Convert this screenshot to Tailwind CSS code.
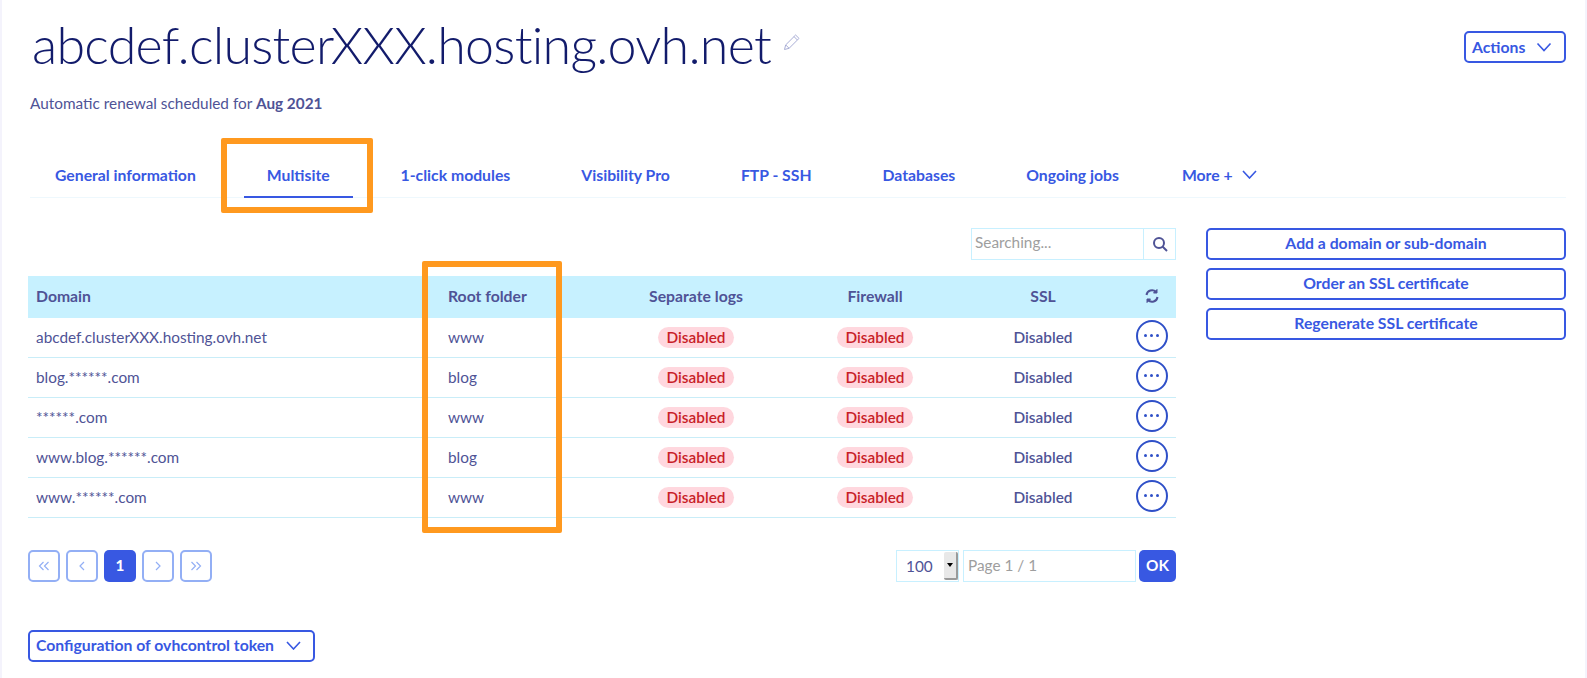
<!DOCTYPE html>
<html lang="en">
<head>
  <meta charset="UTF-8" />
  <title>Multisite | abcdef.clusterXXX.hosting.ovh.net</title>
  <script src="https://cdn.jsdelivr.net/npm/@tailwindcss/browser@4"></script>
</head>
<body class="bg-white font-[family-name:Lato,sans-serif] text-[15.35px] text-[#4f5396] overflow-hidden">
  <div class="relative h-[678px] w-[1587px] border-x-[2px] border-[#f4f3fc] pr-[19px] pl-[26px]">

    <!-- header -->
    <div class="flex items-start justify-between h-[155px]">
      <div>
        <div class="flex items-center pt-[14px] h-[74px]">
          <h1 class="font-light text-[52px] tracking-[-0.75px] leading-[60px] text-[#121b6b] ml-[4px]">abcdef.clusterXXX.hosting.ovh.net</h1>
          <svg class="ml-[12px] -mt-[4px]" width="18" height="18" viewBox="0 0 18 18" fill="none" stroke="#a9aed6" stroke-width="1"><path d="M1.5 16.5l1.2-4.6L12.6 2l3.4 3.4-9.9 9.900z"/><path d="M2.700 11.900l3.400 3.400M11 3.600l3.400 3.400"/></svg>
        </div>
        <p class="mt-[20px] ml-[2px] leading-[18px]">Automatic renewal scheduled for <b class="font-bold">Aug 2021</b></p>
      </div>
      <button class="mt-[31px] flex items-center justify-between h-[32px] w-[102px] pr-[12px] pl-[6px] border-[2px] border-[#3858e2] rounded-[5px] font-bold text-[15.75px] text-[#3858e2]">
        Actions
        <svg width="16" height="10" viewBox="0 0 16 10" fill="none" stroke="#3858e2" stroke-width="1.6"><path d="M1.5 1.5L8 8.5l6.5-7"/></svg>
      </button>
    </div>

    <!-- tabs -->
    <nav class="flex items-stretch gap-[21px] h-[43px] ml-[2px] border-b border-[#eef8fd] font-bold text-[15.75px] text-[#3858e2]">
      <a class="flex items-center px-[25px] pb-[3px]" href="#">General information</a>
      <a class="flex items-center mx-[2px] px-[23px] pb-[1px] border-b-[2px] border-[#3858e2] -mb-[1px]" href="#">Multisite</a>
      <a class="flex items-center px-[25px] pb-[3px]" href="#">1-click modules</a>
      <a class="flex items-center px-[25px] pb-[3px]" href="#">Visibility Pro</a>
      <a class="flex items-center px-[25px] pb-[3px]" href="#">FTP - SSH</a>
      <a class="flex items-center px-[25px] pb-[3px]" href="#">Databases</a>
      <a class="flex items-center px-[25px] pb-[3px]" href="#">Ongoing jobs</a>
      <a class="flex items-center gap-[9px] pl-[17px] pb-[3px]" href="#">
        More +
        <svg width="15" height="9" viewBox="0 0 15 9" fill="none" stroke="#3858e2" stroke-width="1.6"><path d="M1 1l6.500 7L14 1"/></svg>
      </a>
    </nav>

    <!-- main -->
    <div class="flex gap-[30px] mt-[30px]">
      <div class="w-[1148px]">
        <div class="flex justify-end">
          <div class="flex h-[32px] w-[205px] border border-[#c8f0ff]">
            <input class="w-[172px] px-[3px] pb-[2px] border-r border-[#c8f0ff] outline-none placeholder:text-[#9e9e9e]" placeholder="Searching..." />
            <div class="flex flex-1 items-center justify-center">
              <svg width="16" height="16" viewBox="0 0 16 16" fill="none" stroke="#4f5396" stroke-width="2"><circle cx="7" cy="7" r="5"/><path d="M10.500 10.500L15 15"/></svg>
            </div>
          </div>
        </div>

        <table class="mt-[16px] w-full table-fixed border-separate border-spacing-0 [&_td]:border-b [&_td]:border-[#c9edf8]">
          <colgroup>
            <col class="w-[412px]"><col class="w-[161px]"><col class="w-[190px]"><col class="w-[168px]"><col class="w-[168px]"><col class="w-[49px]">
          </colgroup>
          <thead>
            <tr class="h-[42px] bg-[#c7f1ff] text-[15.75px]">
              <th class="px-[8px] pb-[3px] text-left font-bold">Domain</th>
              <th class="px-[8px] pb-[3px] text-left font-bold">Root folder</th>
              <th class="pb-[3px] font-bold">Separate logs</th>
              <th class="pb-[3px] font-bold">Firewall</th>
              <th class="pb-[3px] font-bold">SSL</th>
              <th class="pb-[3px]">
                <svg class="mx-auto" width="14" height="14" viewBox="0 0 14 14" fill="none" stroke="#4f5396" stroke-width="2"><path d="M1.5 6A5.5 5.5 0 0 1 11 3"/><path d="M12.5 8A5.5 5.5 0 0 1 3 11"/><path d="M12 .5V4H8.500z M2 13.500V10h3.500z" fill="#4f5396" stroke-width="1"/></svg>
              </th>
            </tr>
          </thead>
          <tbody>
            <tr class="h-[40px]">
              <td class="px-[8px]">abcdef.clusterXXX.hosting.ovh.net</td><td class="px-[8px]">www</td>
              <td class="text-center"><span class="inline-block rounded-full bg-[#ffd7de] px-[9px] leading-[21px] font-semibold text-[#c81e28]">Disabled</span></td>
              <td class="text-center"><span class="inline-block rounded-full bg-[#ffd7de] px-[9px] leading-[21px] font-semibold text-[#c81e28]">Disabled</span></td>
              <td class="text-center font-semibold">Disabled</td>
              <td><button class="mx-auto mb-[4px] flex h-[32px] w-[32px] items-center justify-center gap-[3px] rounded-full border-[2px] border-[#2f50c8]"><i class="h-[3px] w-[3px] rounded-full bg-[#2f50c8]"></i><i class="h-[3px] w-[3px] rounded-full bg-[#2f50c8]"></i><i class="h-[3px] w-[3px] rounded-full bg-[#2f50c8]"></i></button></td>
            </tr>
            <tr class="h-[40px]">
              <td class="px-[8px]">blog.******.com</td><td class="px-[8px]">blog</td>
              <td class="text-center"><span class="inline-block rounded-full bg-[#ffd7de] px-[9px] leading-[21px] font-semibold text-[#c81e28]">Disabled</span></td>
              <td class="text-center"><span class="inline-block rounded-full bg-[#ffd7de] px-[9px] leading-[21px] font-semibold text-[#c81e28]">Disabled</span></td>
              <td class="text-center font-semibold">Disabled</td>
              <td><button class="mx-auto mb-[4px] flex h-[32px] w-[32px] items-center justify-center gap-[3px] rounded-full border-[2px] border-[#2f50c8]"><i class="h-[3px] w-[3px] rounded-full bg-[#2f50c8]"></i><i class="h-[3px] w-[3px] rounded-full bg-[#2f50c8]"></i><i class="h-[3px] w-[3px] rounded-full bg-[#2f50c8]"></i></button></td>
            </tr>
            <tr class="h-[40px]">
              <td class="px-[8px]">******.com</td><td class="px-[8px]">www</td>
              <td class="text-center"><span class="inline-block rounded-full bg-[#ffd7de] px-[9px] leading-[21px] font-semibold text-[#c81e28]">Disabled</span></td>
              <td class="text-center"><span class="inline-block rounded-full bg-[#ffd7de] px-[9px] leading-[21px] font-semibold text-[#c81e28]">Disabled</span></td>
              <td class="text-center font-semibold">Disabled</td>
              <td><button class="mx-auto mb-[4px] flex h-[32px] w-[32px] items-center justify-center gap-[3px] rounded-full border-[2px] border-[#2f50c8]"><i class="h-[3px] w-[3px] rounded-full bg-[#2f50c8]"></i><i class="h-[3px] w-[3px] rounded-full bg-[#2f50c8]"></i><i class="h-[3px] w-[3px] rounded-full bg-[#2f50c8]"></i></button></td>
            </tr>
            <tr class="h-[40px]">
              <td class="px-[8px]">www.blog.******.com</td><td class="px-[8px]">blog</td>
              <td class="text-center"><span class="inline-block rounded-full bg-[#ffd7de] px-[9px] leading-[21px] font-semibold text-[#c81e28]">Disabled</span></td>
              <td class="text-center"><span class="inline-block rounded-full bg-[#ffd7de] px-[9px] leading-[21px] font-semibold text-[#c81e28]">Disabled</span></td>
              <td class="text-center font-semibold">Disabled</td>
              <td><button class="mx-auto mb-[4px] flex h-[32px] w-[32px] items-center justify-center gap-[3px] rounded-full border-[2px] border-[#2f50c8]"><i class="h-[3px] w-[3px] rounded-full bg-[#2f50c8]"></i><i class="h-[3px] w-[3px] rounded-full bg-[#2f50c8]"></i><i class="h-[3px] w-[3px] rounded-full bg-[#2f50c8]"></i></button></td>
            </tr>
            <tr class="h-[40px]">
              <td class="px-[8px]">www.******.com</td><td class="px-[8px]">www</td>
              <td class="text-center"><span class="inline-block rounded-full bg-[#ffd7de] px-[9px] leading-[21px] font-semibold text-[#c81e28]">Disabled</span></td>
              <td class="text-center"><span class="inline-block rounded-full bg-[#ffd7de] px-[9px] leading-[21px] font-semibold text-[#c81e28]">Disabled</span></td>
              <td class="text-center font-semibold">Disabled</td>
              <td><button class="mx-auto mb-[4px] flex h-[32px] w-[32px] items-center justify-center gap-[3px] rounded-full border-[2px] border-[#2f50c8]"><i class="h-[3px] w-[3px] rounded-full bg-[#2f50c8]"></i><i class="h-[3px] w-[3px] rounded-full bg-[#2f50c8]"></i><i class="h-[3px] w-[3px] rounded-full bg-[#2f50c8]"></i></button></td>
            </tr>
          </tbody>
        </table>

        <!-- pagination -->
        <div class="mt-[32px] flex items-center justify-between">
          <div class="flex gap-[6px]">
            <a class="flex h-[32px] w-[32px] items-center justify-center rounded-[5px] border-[2px] border-[#93aff5]" href="#"><svg width="12" height="10" viewBox="0 0 12 10" fill="none" stroke="#93aff5" stroke-width="1.200"><path d="M5.500 1L1.500 5l4 4M10.500 1l-4 4 4 4"/></svg></a>
            <a class="flex h-[32px] w-[32px] items-center justify-center rounded-[5px] border-[2px] border-[#93aff5]" href="#"><svg width="6" height="10" viewBox="0 0 6 10" fill="none" stroke="#93aff5" stroke-width="1.200"><path d="M5 1L1 5l4 4"/></svg></a>
            <a class="flex h-[32px] w-[32px] items-center justify-center rounded-[5px] bg-[#3858e2] font-bold text-white" href="#">1</a>
            <a class="flex h-[32px] w-[32px] items-center justify-center rounded-[5px] border-[2px] border-[#93aff5]" href="#"><svg width="6" height="10" viewBox="0 0 6 10" fill="none" stroke="#93aff5" stroke-width="1.200"><path d="M1 1l4 4-4 4"/></svg></a>
            <a class="flex h-[32px] w-[32px] items-center justify-center rounded-[5px] border-[2px] border-[#93aff5]" href="#"><svg width="12" height="10" viewBox="0 0 12 10" fill="none" stroke="#93aff5" stroke-width="1.200"><path d="M1.500 1l4 4-4 4M6.500 1l4 4-4 4"/></svg></a>
          </div>
          <div class="flex items-center">
            <div class="flex h-[32px] w-[63px] items-center justify-between border border-[#c8f0ff] pl-[9px]">
              <span class="pt-[2px]">100</span>
              <span class="flex h-[28px] w-[14px] items-center justify-center rounded-[2px] border-r-[2px] border-b-[2px] border-[#9a9a9a] bg-[#e8e8e8]"><i class="h-0 w-0 border-x-[3px] border-t-[4px] border-x-transparent border-t-black"></i></span>
            </div>
            <input class="ml-[4px] h-[32px] w-[173px] border border-[#c8f0ff] px-[4px] pb-[2px] outline-none placeholder:text-[#9e9e9e]" placeholder="Page 1 / 1" />
            <button class="ml-[3px] h-[32px] w-[37px] rounded-[5px] bg-[#3858e2] font-bold text-white">OK</button>
          </div>
        </div>

        <button class="mt-[48px] flex h-[32px] w-[287px] items-center justify-between rounded-[5px] border-[2px] border-[#3858e2] pr-[12px] pl-[6px] pb-[2px] font-bold text-[15.75px] text-[#3858e2]">
          Configuration of ovhcontrol token
          <svg width="15" height="9" viewBox="0 0 15 9" fill="none" stroke="#3858e2" stroke-width="1.600"><path d="M1 1l6.500 7L14 1"/></svg>
        </button>
      </div>

      <!-- side actions -->
      <div class="flex w-[362px] flex-col gap-[8px] font-bold text-[15.75px] text-[#3858e2]">
        <a class="flex h-[32px] items-center justify-center rounded-[5px] border-[2px] border-[#3858e2] pb-[2px]" href="#">Add a domain or sub-domain</a>
        <a class="flex h-[32px] items-center justify-center rounded-[5px] border-[2px] border-[#3858e2] pb-[2px]" href="#">Order an SSL certificate</a>
        <a class="flex h-[32px] items-center justify-center rounded-[5px] border-[2px] border-[#3858e2] pb-[2px]" href="#">Regenerate SSL certificate</a>
      </div>
    </div>

    <!-- orange annotation boxes drawn over the page -->
    <div class="absolute top-[138px] left-[219px] h-[75px] w-[152px] rounded-[2px] border-[6px] border-[#ff991f]"></div>
    <div class="absolute top-[261px] left-[420px] h-[272px] w-[140px] rounded-[2px] border-[6px] border-[#ff991f]"></div>
  </div>
</body>
</html>
